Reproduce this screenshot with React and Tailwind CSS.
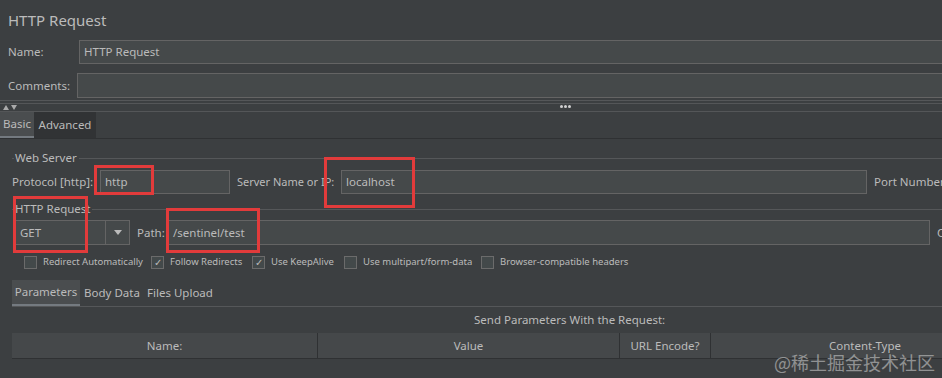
import React from "react";

function Check({ checked, label }) {
  return (
    <div className="flex items-center whitespace-nowrap">
      <div className="shrink-0 w-[13px] h-[13px] border border-[#6b6b6b] bg-[#43494a] flex items-center justify-center text-[10px] leading-none text-[#bbbbbb]">
        {checked ? "✓" : ""}
      </div>
      <span className="ml-[6px] text-[9.5px] text-[#bbbbbb]">{label}</span>
    </div>
  );
}

function Box({ className }) {
  return <div className={"absolute border-[3px] border-[#e23b3b] " + className} />;
}

export default function App() {
  return (
    <div
      className="relative w-[942px] h-[378px] overflow-hidden bg-[#3c3f41] text-[#bbbbbb] text-[11.5px] whitespace-nowrap"
      style={{ fontFamily: '"Noto Sans", "Open Sans", sans-serif' }}
    >
      {/* Title */}
      <div className="pl-2 pt-[10px] h-[40px] text-[15px] leading-[20px]">HTTP Request</div>

      {/* Name */}
      <div className="flex items-center h-[24px]">
        <div className="shrink-0 w-[79px] pl-2">Name:</div>
        <div className="flex-1 h-[24px] border border-[#646464] border-r-0 bg-[#45494a] px-[4px] flex items-center">HTTP Request</div>
      </div>

      {/* Comments */}
      <div className="flex items-center h-[25px] mt-[9px]">
        <div className="shrink-0 w-[77px] pl-2">Comments:</div>
        <div className="flex-1 h-[25px] border border-[#646464] border-r-0 bg-[#45494a]" />
      </div>

      {/* Splitter */}
      <div className="mt-[2px] border-t border-[#555759]" />
      <div className="mt-[2px] h-[9px] border-t border-b border-[#545658] flex items-center relative">
        <div className="flex items-center gap-[2px] pl-[3px]">
          <svg width="6" height="5" viewBox="0 0 6 5"><path d="M0 5 L3 0 L6 5Z" fill="#aaaaaa" /></svg>
          <svg width="6" height="5" viewBox="0 0 6 5"><path d="M0 0 L3 5 L6 0Z" fill="#aaaaaa" /></svg>
        </div>
        <div className="absolute left-[560px] top-[1px] flex gap-[1px]">
          <div className="w-[3px] h-[3px] rounded-full bg-[#d0d0d0]" />
          <div className="w-[3px] h-[3px] rounded-full bg-[#d0d0d0]" />
          <div className="w-[3px] h-[3px] rounded-full bg-[#d0d0d0]" />
        </div>
      </div>

      {/* Tabs */}
      <div className="flex h-[27px] border-b border-[#2f3133]">
        <div className="shrink-0 w-[34px] bg-[#4a4d4f] border-b-2 border-[#747a80] flex items-center justify-center">Basic</div>
        <div className="shrink-0 w-[62px] bg-[#313335] flex items-center justify-center">Advanced</div>
      </div>

      {/* Web Server fieldset */}
      <div className="mt-[11px] flex items-center h-[16px]">
        <div className="shrink-0 ml-[12px] w-[2px] border-t border-[#555759]" />
        <span className="ml-[1px]">Web Server</span>
        <div className="ml-[2px] flex-1 border-t border-[#555759]" />
      </div>
      <div className="mt-[4px] flex items-center h-[24px]">
        <div className="shrink-0 w-[100px] pl-[12px]">Protocol [http]:</div>
        <div className="shrink-0 w-[130px] h-[24px] border border-[#646464] bg-[#45494a] px-[4px] flex items-center">http</div>
        <div className="shrink-0 w-[111px] pl-[7px] text-[11px]">Server Name or IP:</div>
        <div className="shrink-0 w-[526px] h-[24px] border border-[#646464] bg-[#45494a] px-[4px] flex items-center">localhost</div>
        <div className="shrink-0 pl-[7px]">Port Number:</div>
      </div>

      {/* HTTP Request fieldset */}
      <div className="mt-[7px] flex items-center h-[16px]">
        <div className="shrink-0 ml-[12px] w-[2px] border-t border-[#555759]" />
        <span className="ml-[1px]">HTTP Request</span>
        <div className="ml-[2px] flex-1 border-t border-[#555759]" />
      </div>
      <div className="mt-[3px] flex items-center h-[25px]">
        <div className="shrink-0 ml-[15px] w-[115px] h-[25px] border border-[#646464] bg-[#45494a] flex">
          <div className="flex-1 flex items-center px-[4px]">GET</div>
          <div className="w-[24px] border-l border-[#646464] flex items-center justify-center">
            <svg width="8" height="5" viewBox="0 0 8 5"><path d="M0 0 L8 0 L4 5Z" fill="#bbbbbb" /></svg>
          </div>
        </div>
        <div className="shrink-0 w-[38px] pl-[7px]">Path:</div>
        <div className="shrink-0 w-[762px] h-[25px] border border-[#646464] bg-[#45494a] px-[4px] flex items-center">/sentinel/test</div>
        <div className="shrink-0 pl-[7px]">Content encoding:</div>
      </div>

      {/* Checkboxes */}
      <div className="mt-[10px] flex items-center h-[14px] pl-[24px]">
        <div className="shrink-0 w-[127px]"><Check label="Redirect Automatically" /></div>
        <div className="shrink-0 w-[101px]"><Check checked label="Follow Redirects" /></div>
        <div className="shrink-0 w-[92px]"><Check checked label="Use KeepAlive" /></div>
        <div className="shrink-0 w-[137px]"><Check label="Use multipart/form-data" /></div>
        <div className="shrink-0"><Check label="Browser-compatible headers" /></div>
      </div>

      {/* Sub tabs */}
      <div className="mt-[11px] ml-[12px] flex h-[27px] border-b border-[#555759]">
        <div className="shrink-0 w-[68px] bg-[#4a4d4f] border-b-2 border-[#747a80] flex items-center justify-center">Parameters</div>
        <div className="shrink-0 w-[64px] flex items-center justify-center">Body Data</div>
        <div className="shrink-0 w-[72px] flex items-center justify-center">Files Upload</div>
      </div>

      <div className="h-[26px] flex items-center pl-[474px]">Send Parameters With the Request:</div>

      {/* Table header */}
      <div className="ml-[12px] w-[1007px] flex h-[26px] bg-[#45484a] border-b border-[#2f3133]">
        <div className="shrink-0 w-[306px] border-r border-[#2f3133] flex items-center justify-center">Name:</div>
        <div className="shrink-0 w-[302px] border-r border-[#2f3133] flex items-center justify-center">Value</div>
        <div className="shrink-0 w-[91px] border-r border-[#2f3133] flex items-center justify-center">URL Encode?</div>
        <div className="flex-1 flex items-center justify-center">Content-Type</div>
      </div>

      {/* Annotation boxes */}
      <Box className="left-[94px] top-[165px] w-[60px] h-[30px]" />
      <Box className="left-[324px] top-[157px] w-[91px] h-[51px]" />
      <Box className="left-[13px] top-[196px] w-[75px] h-[57px]" />
      <Box className="left-[166px] top-[208px] w-[94px] h-[45px]" />

      {/* Watermark */}
      <div
        className="absolute left-[774px] top-[349px] text-[18px] text-[#c8c8c8] opacity-60"
        style={{ fontFamily: '"Noto Sans CJK SC", sans-serif' }}
      >
        @稀土掘金技术社区
      </div>
    </div>
  );
}
